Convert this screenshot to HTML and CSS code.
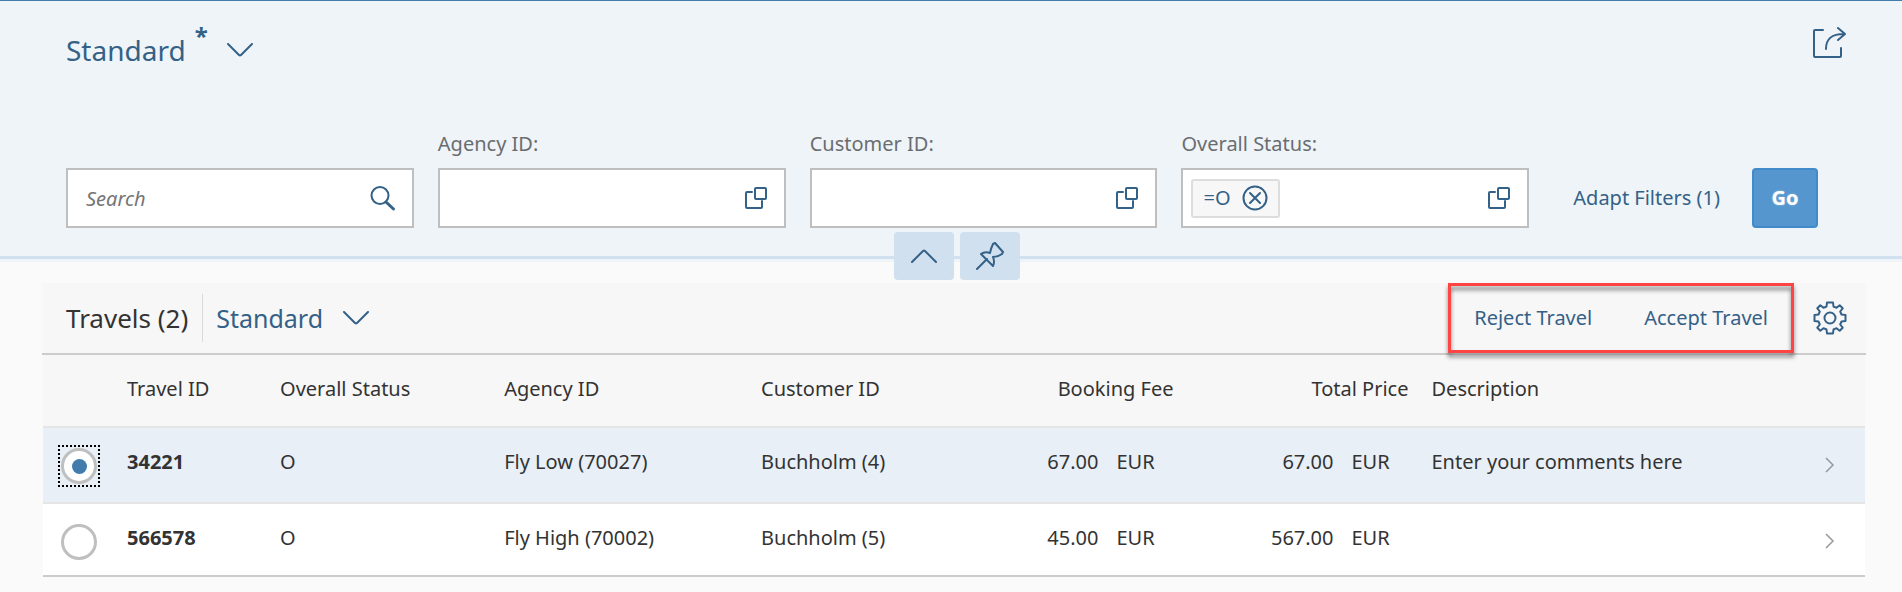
FILE: index.html
```html
<!DOCTYPE html>
<html lang="en">
<head>
<meta charset="utf-8">
<meta name="viewport" content="width=device-width, initial-scale=1">
<title>Travels</title>
<link rel="stylesheet" href="styles.css">
</head>
<body>
<svg class="sprite" aria-hidden="true">
  <symbol id="chevron-down" viewBox="0 0 26 14"><path d="M1 1L12 12Q13 12.8 14 12L25 1"/></symbol>
  <symbol id="value-help" viewBox="0 0 22 22"><path d="M7 5H2Q1 5 1 6V20Q1 21 2 21H16Q17 21 17 20V14"/><rect x="10" y="1" width="11" height="11" rx="1"/></symbol>
  <symbol id="chevron-right" viewBox="0 0 10 16"><path d="M1 1L8 8L1 15"/></symbol>
</svg>

<header class="page-header">
  <div class="title-bar">
    <button class="variant variant-page" type="button">
      <span>Standard</span><span class="modified">*</span>
      <svg class="icon chevron" aria-hidden="true"><use href="#chevron-down"/></svg>
    </button>
    <button class="icon-button" type="button" aria-label="Share">
      <svg class="icon icon-large" viewBox="0 0 34 34" aria-hidden="true"><path d="M11 4H3Q2 4 2 5V30Q2 31 3 31H28Q29 31 29 30V22"/><path d="M14 23C14 12 20 8 32 8M26 2L33 8L26 14"/></svg>
    </button>
  </div>

  <form class="filter-bar">
    <div class="field">
      <div class="input-box">
        <input class="text-input search-input" type="text" placeholder="Search" aria-label="Search">
        <button class="icon-button" type="button" aria-label="Start search">
          <svg class="icon icon-search" viewBox="0 0 24 24" aria-hidden="true"><circle cx="9" cy="9.500" r="8.500"/><path class="handle" d="M15 16L22.500 23"/></svg>
        </button>
      </div>
    </div>
    <div class="field">
      <label for="agency">Agency ID:</label>
      <div class="input-box">
        <input class="text-input" id="agency" type="text">
        <button class="icon-button" type="button" aria-label="Select agency"><svg class="icon icon-help" aria-hidden="true"><use href="#value-help"/></svg></button>
      </div>
    </div>
    <div class="field">
      <label for="customer">Customer ID:</label>
      <div class="input-box">
        <input class="text-input" id="customer" type="text">
        <button class="icon-button" type="button" aria-label="Select customer"><svg class="icon icon-help" aria-hidden="true"><use href="#value-help"/></svg></button>
      </div>
    </div>
    <div class="field">
      <label for="status">Overall Status:</label>
      <div class="input-box">
        <span class="token">=O
          <button class="icon-button" type="button" aria-label="Remove =O"><svg class="icon icon-remove" viewBox="0 0 26 26" aria-hidden="true"><circle cx="13" cy="13" r="11.500"/><path d="M8 8L18 18M18 8L8 18"/></svg></button>
        </span>
        <input class="text-input" id="status" type="text">
        <button class="icon-button" type="button" aria-label="Select status"><svg class="icon icon-help" aria-hidden="true"><use href="#value-help"/></svg></button>
      </div>
    </div>
    <div class="filter-actions">
      <button class="text-button" type="button">Adapt Filters (1)</button>
      <button class="go-button" type="button">Go</button>
    </div>
  </form>

  <div class="header-toggles">
    <button class="toggle" type="button" aria-label="Collapse header"><svg class="icon chevron" viewBox="0 0 26 14" aria-hidden="true"><path d="M1 13L12 2Q13 1.200 14 2L25 13"/></svg></button>
    <button class="toggle" type="button" aria-label="Pin header"><svg class="icon icon-pin" viewBox="0 0 28 28" aria-hidden="true"><path d="M1 27L11 17M5 12L17 24Q19 20 17 15Q22 15 26 12L27 10L19 1L17 2Q15 6 14 11Q9 9 5 12Z"/></svg></button>
  </div>
</header>

<main class="content">
  <div class="toolbar">
    <h2>Travels (2)</h2>
    <span class="divider"></span>
    <button class="variant variant-table" type="button">
      <span>Standard</span>
      <svg class="icon chevron" aria-hidden="true"><use href="#chevron-down"/></svg>
    </button>
    <div class="highlight">
      <button class="text-button" type="button">Reject Travel</button>
      <button class="text-button" type="button">Accept Travel</button>
    </div>
    <button class="icon-button settings" type="button" aria-label="Settings">
      <svg class="icon icon-large" viewBox="0 0 34 34" aria-hidden="true"><circle cx="17" cy="17" r="5.500"/><path d="M14 1.500H20L20.500 5.500L23.500 6.800L26.700 4.300L29.700 7.300L27.200 10.500L28.500 13.500L32.500 14V20L28.500 20.500L27.200 23.500L29.700 26.700L26.700 29.700L23.500 27.200L20.500 28.500L20 32.500H14L13.500 28.500L10.500 27.200L7.300 29.700L4.300 26.700L6.800 23.500L5.500 20.500L1.500 20V14L5.500 13.500L6.800 10.500L4.300 7.300L7.300 4.300L10.500 6.800L13.500 5.500Z"/></svg>
    </button>
  </div>

  <table class="travels">
    <colgroup>
      <col class="col-select"><col class="col-travel"><col class="col-status"><col class="col-agency"><col class="col-customer"><col class="col-amount"><col class="col-amount"><col><col class="col-nav">
    </colgroup>
    <thead>
      <tr>
        <td></td>
        <th scope="col">Travel ID</th>
        <th scope="col">Overall Status</th>
        <th scope="col">Agency ID</th>
        <th scope="col">Customer ID</th>
        <th scope="col" class="amount">Booking Fee</th>
        <th scope="col" class="amount">Total Price</th>
        <th scope="col">Description</th>
        <td></td>
      </tr>
    </thead>
    <tbody>
      <tr class="selected">
        <td class="select"><span class="focus"><input class="radio" type="radio" name="travel" aria-label="Select travel 34221" checked></span></td>
        <td class="key">34221</td>
        <td>O</td>
        <td>Fly Low (70027)</td>
        <td>Buchholm (4)</td>
        <td class="amount">67.00<span class="currency">EUR</span></td>
        <td class="amount">67.00<span class="currency">EUR</span></td>
        <td>Enter your comments here</td>
        <td class="nav"><svg class="icon-nav" aria-hidden="true"><use href="#chevron-right"/></svg></td>
      </tr>
      <tr>
        <td class="select"><span class="focus"><input class="radio" type="radio" name="travel" aria-label="Select travel 566578"></span></td>
        <td class="key">566578</td>
        <td>O</td>
        <td>Fly High (70002)</td>
        <td>Buchholm (5)</td>
        <td class="amount">45.00<span class="currency">EUR</span></td>
        <td class="amount">567.00<span class="currency">EUR</span></td>
        <td></td>
        <td class="nav"><svg class="icon-nav" aria-hidden="true"><use href="#chevron-right"/></svg></td>
      </tr>
    </tbody>
  </table>
</main>
</body>
</html>
```
FILE: styles.css
```css
:root {
  --link: #346187;
  --text: #333;
  --field-border: #bfbfbf;
}

* { box-sizing: border-box; }

body {
  margin: 0;
  background: #fafafa;
  color: var(--text);
  font: 20px/28px "Noto Sans", "Open Sans", sans-serif;
}

button, input { font: inherit; color: inherit; }

button {
  padding: 0;
  border: 0;
  background: none;
  color: var(--link);
  cursor: pointer;
}

.sprite { position: absolute; width: 0; height: 0; }

.icon {
  display: block;
  flex: none;
  fill: none;
  stroke: var(--link);
  stroke-width: 2;
  stroke-linecap: round;
  stroke-linejoin: round;
}
.chevron { width: 26px; height: 14px; }
.icon-large { width: 34px; height: 34px; }
.icon-help { width: 22px; height: 22px; }
.icon-search { width: 24px; height: 24px; overflow: visible; }
.icon-search .handle { stroke-width: 3; }
.icon-remove { width: 26px; height: 26px; }
.icon-pin { width: 28px; height: 28px; }
.icon-button { flex: none; }

/* Page header */
.page-header {
  position: relative;
  border-top: 1px solid #427cac;
  border-bottom: 3px solid #d1e0ee;
  background: #eff4f8;
  box-shadow: 0 3px 0 #eff4f8;
}

.title-bar {
  display: flex;
  justify-content: space-between;
  align-items: flex-start;
  padding: 25px 56px 0 66px;
}

.variant { display: flex; align-items: center; }
.variant-page { font-size: 28px; line-height: 48px; }
.modified {
  align-self: flex-start;
  margin: -14px 19px 0 9px;
  font-size: 24px;
  font-weight: 700;
}

.filter-bar {
  display: flex;
  align-items: flex-end;
  gap: 24px;
  padding: 56px 84px 28px 66px;
}

.field { flex: 1 1 0; min-width: 0; }
.field label {
  display: block;
  margin-bottom: 10px;
  color: #6a6d70;
}

.input-box {
  display: flex;
  align-items: center;
  height: 60px;
  padding: 0 17px 0 8px;
  border: 2px solid var(--field-border);
  background: #fff;
}

.text-input {
  flex: 1 1 0;
  min-width: 0;
  height: 100%;
  padding: 0 10px;
  border: 0;
  outline: 0;
  background: none;
}
.search-input::placeholder { color: #757575; font-style: italic; opacity: 1; }

.token {
  display: flex;
  align-items: center;
  gap: 11px;
  height: 39px;
  padding: 0 10px;
  border: 2px solid #ddd;
  border-radius: 3px;
  background: #f7f7f7;
  color: var(--link);
}

.filter-actions {
  display: flex;
  align-items: center;
  gap: 32px;
  padding-left: 20px;
}

.go-button {
  width: 66px;
  height: 60px;
  border: 2px solid #428bca;
  border-radius: 4px;
  background: #5496cd;
  color: #fff;
  font-weight: 700;
  text-shadow: 0 0 2px rgba(255, 255, 255, .5);
}

.header-toggles {
  position: absolute;
  left: 0;
  right: 0;
  bottom: -24px;
  display: flex;
  justify-content: center;
  gap: 6px;
  padding-left: 12px;
}
.toggle {
  display: grid;
  place-items: center;
  width: 60px;
  height: 48px;
  border-radius: 4px;
  background: #d1e0ee;
}

/* Table */
.content { padding: 24px 36px 14px 42px; }

.toolbar {
  display: flex;
  align-items: center;
  height: 72px;
  padding: 0 19px 0 24px;
  border-bottom: 2px solid #ccc;
  background: #f7f7f7;
}
.toolbar h2 { margin: 0; font-size: 26px; font-weight: 400; line-height: 36px; }
.divider { width: 1px; height: 48px; margin: 0 13px 0 14px; background: #d9d9d9; }
.variant-table { gap: 20px; font-size: 25px; line-height: 36px; }

.highlight {
  position: relative;
  display: flex;
  align-items: center;
  align-self: stretch;
  gap: 52px;
  margin-left: auto;
  padding: 0 26px;
}
.highlight::after {
  content: "";
  position: absolute;
  inset: 0;
  border: 3px solid #f44;
  filter: drop-shadow(0 4px 2px rgba(0, 0, 0, .5));
  pointer-events: none;
}
.settings { margin-left: 19px; }

.travels {
  width: calc(100% - 2px);
  margin: 0 1px;
  table-layout: fixed;
  border-collapse: separate;
  border-spacing: 0;
}
.col-select { width: 73px; }
.col-travel { width: 8.4%; }
.col-status { width: 12.3%; }
.col-agency { width: 14.1%; }
.col-customer { width: 11%; }
.col-amount { width: 12.9%; }
.col-nav { width: 64px; }

.travels th, .travels td {
  padding: 20px 12px 23px 11px;
  border-bottom: 2px solid #e5e5e5;
  font-weight: 400;
  text-align: left;
  vertical-align: top;
  white-space: nowrap;
}
.travels thead { background: #f7f7f7; }
.travels tbody { background: #fff; }
.travels .selected { background: #e8eff7; }
.travels tbody tr:last-child td { border-bottom-color: #ccc; }
.travels .key { font-weight: 700; }
.travels .amount { text-align: right; }
.currency { display: inline-block; width: 57px; margin-left: 18px; text-align: left; }

.travels .select { padding: 17px 15px 12px; }
.travels .selected .select { padding-bottom: 15px; }
.travels .nav { padding: 29px 0 0 24px; }
.icon-nav {
  display: block;
  width: 10px;
  height: 16px;
  fill: none;
  stroke: #999;
  stroke-width: 1.500;
}

.focus { display: grid; place-items: center; width: 42px; height: 42px; border: 2px solid transparent; }
.selected .focus { border: 2px dotted #000; }
.radio {
  appearance: none;
  display: grid;
  place-items: center;
  width: 36px;
  height: 36px;
  margin: 0;
  border: 3px solid var(--field-border);
  border-radius: 50%;
  background: #fff;
}
.radio:checked::before {
  content: "";
  width: 15px;
  height: 15px;
  border-radius: 50%;
  background: #427cac;
}
```
